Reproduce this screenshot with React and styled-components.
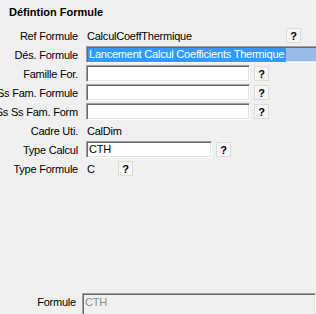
import React from 'react';
import styled, { createGlobalStyle } from 'styled-components';

const GlobalStyle = createGlobalStyle`
  html, body { margin: 0; padding: 0; background: #f0f0f0; }
  body {
    font-family: "Liberation Sans", Arial, sans-serif;
    font-size: 11px;
    letter-spacing: -0.22px;
    color: #000;
  }
`;

const Page = styled.div`
  height: 100vh;
  overflow: hidden;
  display: flex;
  flex-direction: column;
`;

const Title = styled.div`
  font-weight: bold;
  font-size: 11px;
  letter-spacing: 0;
  padding: 6px 0 0 9px;
  height: 20px;
`;

const Form = styled.div`
  display: grid;
  grid-template-columns: 78px 1fr;
  column-gap: 8px;
  grid-auto-rows: 19px;
  align-items: center;
`;

const Label = styled.div`
  display: flex;
  justify-content: flex-end;
  white-space: nowrap;
  width: ${p => p.width || 78}px;
`;

const Field = styled.div`
  display: flex;
  align-items: center;
  gap: 4px;
  min-width: 0;
`;

const Value = styled.div`
  width: ${p => p.width}px;
  padding-left: 1px;
  box-sizing: border-box;
  white-space: nowrap;
`;

const Input = styled.div`
  box-sizing: border-box;
  width: ${p => p.width}px;
  flex-shrink: 0;
  height: 17px;
  border: 1px solid;
  border-color: #a0a0a0 #fff #fff #a0a0a0;
  box-shadow: inset 1px 1px 0 #696969, inset -1px -1px 0 #e3e3e3;
  background: ${p => (p.disabled ? '#f0f0f0' : '#fff')};
  color: ${p => (p.disabled ? '#8a8a8a' : '#000')};
  padding: 1px 0 0 2px;
  white-space: nowrap;
  overflow: hidden;
  line-height: 13px;
`;

const SelectedInput = styled(Input)`
  background: #99bbe8;
  padding-left: 1px;
  display: flex;
`;

const Selection = styled.span`
  background: #3399ff;
  color: #fff;
  padding: 0 1px;
  border-right: 1px solid #d07a2a;
`;

const Help = styled.button`
  box-sizing: border-box;
  width: 15px;
  height: 15px;
  flex-shrink: 0;
  padding: 0;
  margin: 0;
  border: 1px solid #dcdcdc;
  background: #f6f6f6;
  font-family: "Liberation Sans", Arial, sans-serif;
  font-weight: bold;
  font-size: 11px;
  line-height: 12px;
  color: #000;
`;

const Spacer = styled.div`
  flex: 1;
`;

const Footer = styled.div`
  display: flex;
  align-items: flex-start;
  gap: 6px;
  height: 21px;
  flex-shrink: 0;
`;

const FooterLabel = styled(Label)`
  padding-top: 3px;
`;

const FooterInput = styled(Input)`
  height: 26px;
  flex: 1;
  padding-top: 2px;
`;

export default function App() {
  return (
    <Page>
      <GlobalStyle />
      <Title>Défintion Formule</Title>
      <Form>
        <Label>Ref Formule</Label>
        <Field>
          <Value width={196}>CalculCoeffThermique</Value>
          <Help>?</Help>
        </Field>

        <Label>Dés. Formule</Label>
        <Field>
          <SelectedInput width={240}>
            <Selection>Lancement Calcul Coefficients Thermique</Selection>
          </SelectedInput>
        </Field>

        <Label>Famille For.</Label>
        <Field>
          <Input width={164} />
          <Help>?</Help>
        </Field>

        <Label>Ss Fam. Formule</Label>
        <Field>
          <Input width={164} />
          <Help>?</Help>
        </Field>

        <Label>Ss Ss Fam. Form</Label>
        <Field>
          <Input width={164} />
          <Help>?</Help>
        </Field>

        <Label>Cadre Uti.</Label>
        <Field>
          <Value width={120}>CalDim</Value>
        </Field>

        <Label>Type Calcul</Label>
        <Field>
          <Input width={126}>CTH</Input>
          <Help>?</Help>
        </Field>

        <Label>Type Formule</Label>
        <Field>
          <Value width={28}>C</Value>
          <Help>?</Help>
        </Field>
      </Form>
      <Spacer />
      <Footer>
        <FooterLabel width={76}>Formule</FooterLabel>
        <FooterInput disabled>CTH</FooterInput>
      </Footer>
    </Page>
  );
}
